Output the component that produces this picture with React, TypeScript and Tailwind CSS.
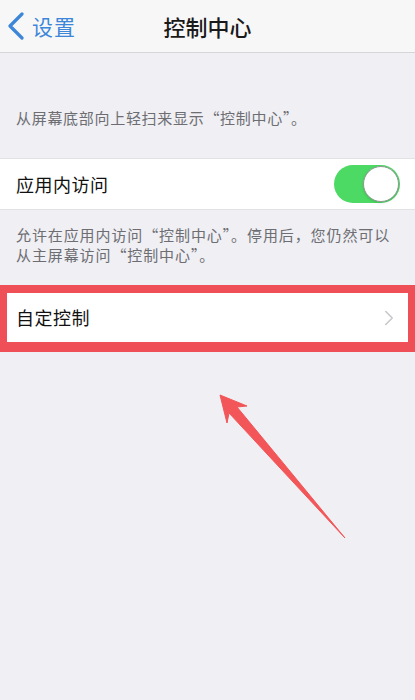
import { ChevronRight } from "lucide-react";

const font = {
	fontFamily: '"Noto Sans CJK SC", "Noto Sans", sans-serif',
};

const Toggle = () => (
	<div className="w-[66px] h-[38px] rounded-full bg-[#4cd964] relative shrink-0">
		<div className="absolute right-[1px] top-[1px] w-[36px] h-[36px] rounded-full bg-white border border-[#8c9a90] shadow" />
	</div>
);

const Arrow = () => (
	<svg
		className="absolute left-0 top-0 pointer-events-none"
		width="415"
		height="700"
		viewBox="0 0 415 700"
	>
		<polygon
			points="220,395 247,406 237,407 345,538 229,413 227,423"
			fill="#f25658"
			stroke="#f25658"
			strokeWidth="1"
			strokeLinejoin="round"
		/>
	</svg>
);

export default function App() {
	return (
		<div
			className="relative w-[415px] min-h-[700px] bg-[#efeff4] overflow-hidden"
			style={font}
		>
			<header className="h-[53px] bg-[#f7f7f8] border-b border-[#d6d6da] flex items-center relative">
				<div className="flex items-center pl-[7px] gap-[8px] text-[#3d86d8]">
					<svg width="17" height="28" viewBox="0 0 17 28" fill="none">
						<path
							d="M15 2 L3 14 L15 26"
							stroke="currentColor"
							strokeWidth="3.2"
							strokeLinecap="round"
							strokeLinejoin="round"
						/>
					</svg>
					<span className="text-[21px] leading-none tracking-[1px]">设置</span>
				</div>
				<h1 className="absolute left-0 right-0 text-center text-[22px] leading-none text-[#1a1a1a] font-medium pointer-events-none">
					控制中心
				</h1>
			</header>

			<p className="pt-[55px] px-[16px] text-[15px] leading-[20px] text-[#6d6d72] tracking-[0.7px]">
				从屏幕底部向上轻扫来显示“控制中心”。
			</p>

			<div className="mt-[30px] h-[52px] bg-white border-y border-[#e2e2e6] flex items-center justify-between pl-[16px] pr-[15px]">
				<span className="text-[18px] text-[#111] tracking-[0.5px]">应用内访问</span>
				<Toggle />
			</div>

			<p className="pt-[15px] px-[16px] text-[15px] leading-[20px] text-[#6d6d72] tracking-[0.9px] whitespace-nowrap">
				允许在应用内访问“控制中心”。停用后，您仍然可以
				<br />
				从主屏幕访问“控制中心”。
			</p>

			<div className="mt-[20px] border-x-[7px] border-t-[8px] border-b-[10px] border-[#ef4f56]">
				<div className="h-[49px] bg-white flex items-center justify-between pl-[9px] pr-[6px]">
					<span className="text-[18px] text-[#111] tracking-[0.5px]">自定控制</span>
					<ChevronRight
						size={26}
						strokeWidth={1.4}
						className="text-[#c7c7cc]"
					/>
				</div>
			</div>

			<Arrow />
		</div>
	);
}
